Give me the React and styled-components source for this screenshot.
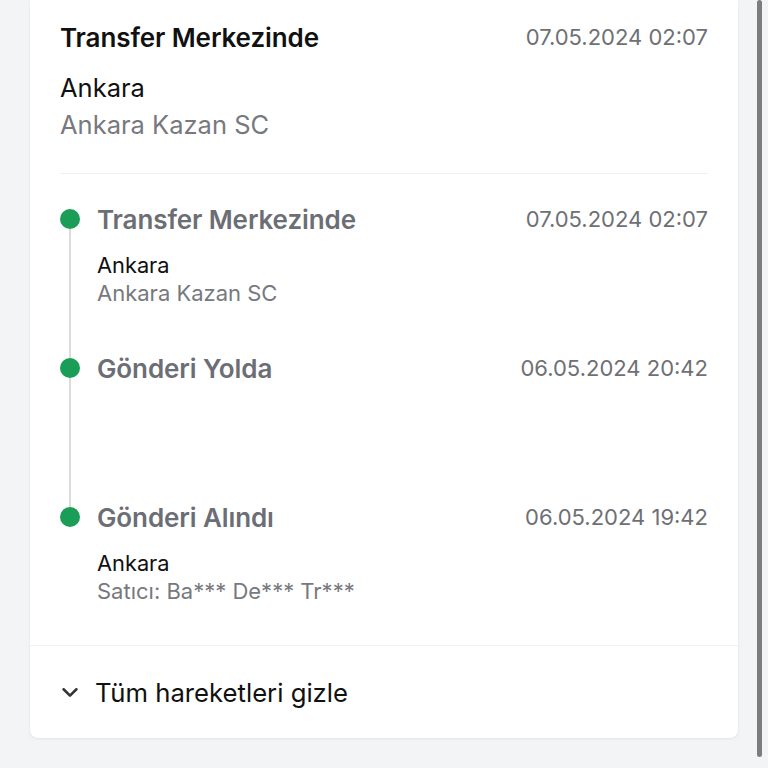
import React from 'react';
import styled, { createGlobalStyle } from 'styled-components';

const GlobalStyle = createGlobalStyle`
  html, body {
    margin: 0;
    padding: 0;
    background: #f3f4f6;
    font-family: 'Inter', 'Noto Sans', sans-serif;
    -webkit-font-smoothing: antialiased;
    overflow: hidden;
  }
`;

const events = [
  { title: 'Transfer Merkezinde', date: '07.05.2024 02:07', place: 'Ankara', detail: 'Ankara Kazan SC' },
  { title: 'Gönderi Yolda', date: '06.05.2024 20:42' },
  { title: 'Gönderi Alındı', date: '06.05.2024 19:42', place: 'Ankara', detail: 'Satıcı: Ba*** De*** Tr***' },
];

export default function App() {
  const latest = events[0];
  return (
    <Page>
      <GlobalStyle />
      <Card>
        <Summary>
          <HeadRow>
            <Title>{latest.title}</Title>
            <DateText>{latest.date}</DateText>
          </HeadRow>
          <Place $big>{latest.place}</Place>
          <Detail $big>{latest.detail}</Detail>
        </Summary>

        <Timeline>
          {events.map((ev, i) => (
            <Item key={i} $last={i === events.length - 1}>
              <Rail>
                <RailTop $show={i > 0} />
                <Dot />
                <RailLine $show={i < events.length - 1} />
              </Rail>
              <ItemBody>
                <HeadRow>
                  <Title $muted>{ev.title}</Title>
                  <DateText>{ev.date}</DateText>
                </HeadRow>
                {ev.place && (
                  <Meta>
                    <Place>{ev.place}</Place>
                    <Detail>{ev.detail}</Detail>
                  </Meta>
                )}
              </ItemBody>
            </Item>
          ))}
        </Timeline>

        <Toggle>
          <svg width='22' height='22' viewBox='0 0 24 24' fill='none' stroke='#333' strokeWidth='2.8' strokeLinecap='round' strokeLinejoin='round'>
            <path d='M5 9l7 7 7-7' />
          </svg>
          <span>Tüm hareketleri gizle</span>
        </Toggle>
      </Card>
      <Track>
        <Thumb />
      </Track>
    </Page>
  );
}

const Page = styled.div`
  display: flex;
  align-items: flex-start;
  width: 768px;
  height: 768px;
  padding-left: 30px;
  box-sizing: border-box;
`;

const Card = styled.div`
  width: 708px;
  flex-shrink: 0;
  background: #fff;
  border-radius: 0 0 8px 8px;
  box-shadow: 0 1px 3px rgba(0, 0, 0, 0.08);
`;

const Track = styled.div`
  flex: 1;
  align-self: stretch;
  display: flex;
  justify-content: flex-end;
  padding-right: 6px;
`;

const Thumb = styled.div`
  width: 5px;
  min-width: 5px;
  height: 757px;
  border-radius: 3px;
  background: #7d7d7d;
`;

const Summary = styled.div`
  margin: 0 30px;
  padding-top: 21px;
  height: 152px;
  border-bottom: 1px solid #f0f0f0;
`;

const HeadRow = styled.div`
  display: flex;
  justify-content: space-between;
  align-items: center;
  height: 32px;
`;

const Title = styled.div`
  font-size: 26px;
  font-weight: 600;
  color: ${(p) => (p.$muted ? '#6b6e74' : '#111')};
  letter-spacing: -0.1px;
`;

const DateText = styled.div`
  font-size: 22px;
  color: #6e7075;
`;

const Place = styled.div`
  font-size: ${(p) => (p.$big ? '25.5px' : '21.8px')};
  line-height: ${(p) => (p.$big ? '37px' : '28px')};
  color: #111;
  margin-top: ${(p) => (p.$big ? '16px' : '0')};
`;

const Detail = styled.div`
  font-size: ${(p) => (p.$big ? '25.5px' : '22px')};
  line-height: ${(p) => (p.$big ? '37px' : '28px')};
  color: #77797e;
`;

const Timeline = styled.div`
  padding: 29px 30px 0;
  border-bottom: 1px solid #f2f2f2;
`;

const Item = styled.div`
  display: flex;
  gap: 17px;
  min-height: ${(p) => (p.$last ? '144px' : '149px')};
`;

const Rail = styled.div`
  width: 20px;
  display: flex;
  flex-direction: column;
  align-items: center;
`;

const RailTop = styled.div`
  width: 2px;
  height: 6px;
  background: ${(p) => (p.$show ? '#dcdcdc' : 'transparent')};
`;

const Dot = styled.div`
  width: 20px;
  height: 20px;
  border-radius: 50%;
  background: #1a9e57;
  flex-shrink: 0;
`;

const RailLine = styled.div`
  width: 2px;
  flex: 1;
  background: ${(p) => (p.$show ? '#dcdcdc' : 'transparent')};
`;

const ItemBody = styled.div`
  flex: 1;
`;

const Meta = styled.div`
  margin-top: 16px;
`;

const Toggle = styled.div`
  display: flex;
  align-items: center;
  gap: 14px;
  padding: 0 29px;
  height: 92px;
  font-size: 25.7px;
  color: #111;
`;
